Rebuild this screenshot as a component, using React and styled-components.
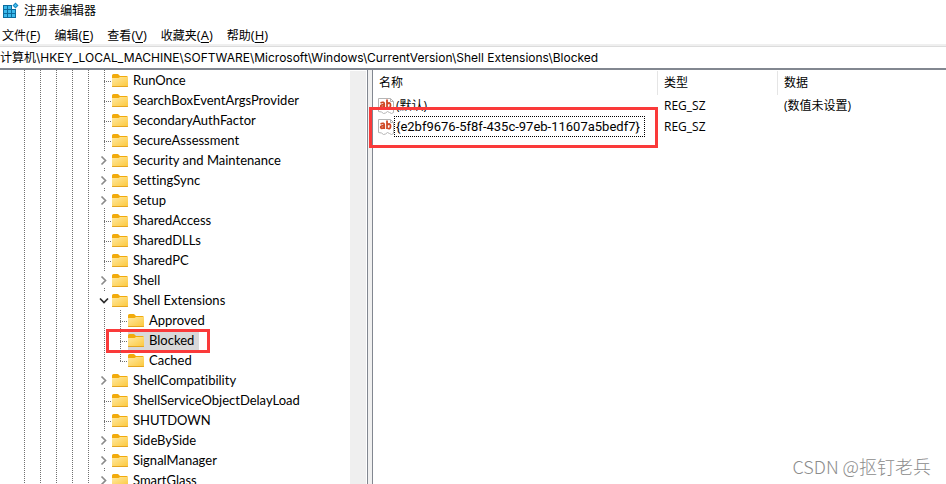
import React from "react";
import styled, { createGlobalStyle, css } from "styled-components";

const uiFont = '"Open Sans", "Noto Sans CJK SC", sans-serif';
const treeFont = 'Lato, "Noto Sans CJK SC", sans-serif';
const valueFont = 'Roboto, "Noto Sans CJK SC", sans-serif';
const addressFont = 'Inter, "Noto Sans CJK SC", sans-serif';

const GlobalStyle = createGlobalStyle`
  * { box-sizing: border-box; }
  body { margin: 0; background: #fff; overflow: hidden; }
  button, input { font: inherit; color: inherit; border: 0; background: none; padding: 0; }
`;

const Window = styled.div`
  position: relative;
  display: flex;
  flex-direction: column;
  height: 100vh;
  color: #000;
  background: #fff;
  font: 12px/20px ${uiFont};
  font-variant-ligatures: none;
`;

const TitleBar = styled.header`
  display: flex;
  align-items: center;
  gap: 5px;
  height: 22px;
  padding-left: 3px;
`;

const Title = styled.h1`
  margin: 0;
  font-size: 12px;
  font-weight: 400;
`;

const MenuBar = styled.nav`
  display: flex;
  align-items: center;
  gap: 14px;
  height: 24px;
  padding: 4px 2px 0;
  border-bottom: 2px solid #efefef;
`;

const MenuItem = styled.button`
  white-space: nowrap;
  text-underline-offset: 2px;
`;

const MenuKey = styled.span`
  font-size: 13px;
`;

const AddressBar = styled.input`
  width: 100%;
  height: 24px;
  padding-bottom: 2px;
  border-top: 1px solid #dcdcdc;
  border-bottom: 2px solid #828790;
  font: 12px/20px ${addressFont};
  font-variant-ligatures: none;
  outline: 0;
`;

const Panes = styled.main`
  display: flex;
  flex: 1;
  min-height: 0;
`;

const TreePane = styled.section`
  display: flex;
  flex: 0 0 368px;
  border-right: 1px solid #828790;
`;

const Tree = styled.ul`
  flex: 1;
  margin: 0;
  padding: 0 0 0 16px;
  overflow: hidden;
  list-style: none;
  font: 13px/20px ${treeFont};
  font-variant-ligatures: none;
`;

const ScrollTrack = styled.div`
  width: 16px;
  margin: 1px 1px 0 0;
  background: #efefef;
`;

const Splitter = styled.div`
  flex: 0 0 4px;
  background: #f0f0f0;
`;

const TreeRow = styled.li`
  position: relative;
  display: flex;
  height: 20px;
`;

const vertical = "repeating-linear-gradient(to bottom, #707070 0 1px, transparent 1px 2px)";
const horizontal = "repeating-linear-gradient(to right, #707070 0 1px, transparent 1px 2px)";

const guideKinds = {
  line: css`
    background: ${vertical} 8px 0 / 1px 20px no-repeat;
  `,
  leaf: css`
    background: ${vertical} 8px 0 / 1px 20px no-repeat, ${horizontal} 8px 11px / 8px 1px no-repeat;
  `,
  last: css`
    background: ${vertical} 8px 0 / 1px 12px no-repeat, ${horizontal} 8px 11px / 8px 1px no-repeat;
  `,
  closed: css`
    background: ${vertical} 8px 0 / 1px 2px no-repeat, ${vertical} 8px 18px / 1px 2px no-repeat;
  `,
};

const Guide = styled.span`
  flex: 0 0 16px;
  height: 20px;
  ${(p) => guideKinds[p.$kind]}
`;

const Expander = styled.button`
  display: flex;
  align-items: center;
  justify-content: center;
  flex: 0 0 16px;
  height: 20px;
  ${guideKinds.closed}
`;

const TreeLabel = styled.button`
  display: flex;
  align-items: center;
  gap: 5px;
  height: 20px;
  padding-right: 5px;
  white-space: nowrap;
  background: ${(p) => (p.$selected ? "#d9d9d9" : "none")};
`;

const TreeMark = styled.span`
  position: absolute;
  inset: -1px auto auto 90px;
  width: 104px;
  height: 24px;
  border: 3px solid #fa3a3a;
  pointer-events: none;
`;

const ListPane = styled.section`
  flex: 1;
  min-width: 0;
  padding-top: 1px;
  border-left: 1px solid #828790;
`;

const ValueTable = styled.table`
  width: 100%;
  table-layout: fixed;
  border-collapse: separate;
  border-spacing: 0;
`;

const HeadCell = styled.th`
  width: ${(p) => p.$width || "auto"};
  height: 24px;
  padding: 0 6px;
  border-right: ${(p) => (p.$width ? "1px solid #e5e5e5" : "0")};
  font-weight: 400;
  text-align: left;
`;

const Cell = styled.td`
  height: 21px;
  padding: 0 6px;
  white-space: nowrap;
`;

const NameCell = styled(Cell)`
  padding: 0 4px;
`;

const NameBox = styled.div`
  position: relative;
  display: flex;
  align-items: center;
  height: 21px;
`;

const ValueName = styled.span`
  height: 21px;
  padding: 0 4px 0 1px;
  border: 1px dotted ${(p) => (p.$focused ? "#000" : "transparent")};
  font: ${(p) => (p.$focused ? `13px/19px ${valueFont}` : `12px/19px ${uiFont}`)};
`;

const ValueMark = styled.span`
  position: absolute;
  inset: -9px auto auto -8px;
  width: 289px;
  height: 41px;
  border: 3px solid #fa3a3a;
  pointer-events: none;
`;

const Watermark = styled.footer`
  position: absolute;
  right: 15px;
  bottom: 6px;
  color: #8c8c8c;
  font: 300 18px/24px "Noto Sans CJK SC", sans-serif;
`;

const RegistryIcon = () => (
  <svg width="16" height="18" viewBox="0 0 16 18" aria-hidden="true">
    <path d="M0 3h13v13H0z" fill="#0b6c9e" />
    <path d="M1 4h3v3H1zM5 4h3v3H5zM1 8h3v3H1zM5 8h3v3H5zM9 8h3v3H9zM1 12h3v3H1zM5 12h3v3H5zM9 12h3v3H9z" fill="#3bb8ea" />
    <path d="M9 3h4v4H9z" fill="#fff" />
    <path d="M12.500 0.500l3 3-3 3-3-3z" fill="#1788c0" />
    <path d="M12.500 2L14 3.500l-1.500 1.500L11 3.500z" fill="#4cc5f2" />
  </svg>
);

const FolderIcon = () => (
  <svg width="16" height="20" viewBox="0 0 16 20" aria-hidden="true">
    <defs>
      <linearGradient id="folder" x1="0" y1="0" x2="1" y2="1">
        <stop offset="0" stopColor="#ffe9a2" />
        <stop offset="1" stopColor="#fcc93f" />
      </linearGradient>
    </defs>
    <path d="M0 5.500Q0 4 1.500 4H6l2 2h6.500Q16 6 16 7.500V9H0z" fill="#f2ab0c" />
    <path d="M0 8h6.500L8 7h8v9H0z" fill="url(#folder)" />
    <path d="M0 16h16v.5q0 .5-1 .5H1q-1 0-1-.5z" fill="#e5a520" />
  </svg>
);

const ClosedIcon = () => (
  <svg width="8" height="12" viewBox="0 0 8 12" aria-hidden="true">
    <path d="M1.500 2.500l4 4-4 4" fill="none" stroke="#8b8b8b" strokeWidth="1.700" />
  </svg>
);

const OpenIcon = () => (
  <svg width="10" height="8" viewBox="0 0 10 8" aria-hidden="true">
    <path d="M1 2.500l4 4 4-4" fill="none" stroke="#2c2c2c" strokeWidth="1.700" />
  </svg>
);

const ValueIconSvg = styled.svg`
  flex: none;
  margin-left: 1px;
`;

const StringIcon = () => (
  <ValueIconSvg width="16" height="18" viewBox="0 0 16 18" aria-hidden="true">
    <path d="M.5 1.500h12l3 3v11l-2 1-2-1-2-1-2 1.500-2 .5-2-1.500-3-.5z" fill="#fff" stroke="#b5b5b5" />
    <path d="M12.500 1.500v3h3" fill="none" stroke="#b5b5b5" />
    <g fill="none" stroke="#d04a26" strokeWidth="1.800">
      <path d="M2.500 5.800Q6.200 4.500 6.200 7v4M6.200 7.800Q2.700 7.500 2.700 9.300T6.200 9.500" />
      <path d="M9 2.500V11M9 7q3.500-2.500 3.500 1.200T9 10" />
    </g>
  </ValueIconSvg>
);

const menus = [
  ["文件", "F"],
  ["编辑", "E"],
  ["查看", "V"],
  ["收藏夹", "A"],
  ["帮助", "H"],
];

const keys = [
  { name: "RunOnce" },
  { name: "SearchBoxEventArgsProvider" },
  { name: "SecondaryAuthFactor" },
  { name: "SecureAssessment" },
  { name: "Security and Maintenance", state: "closed" },
  { name: "SettingSync", state: "closed" },
  { name: "Setup", state: "closed" },
  { name: "SharedAccess" },
  { name: "SharedDLLs" },
  { name: "SharedPC" },
  { name: "Shell", state: "closed" },
  { name: "Shell Extensions", state: "open" },
  { name: "Approved", child: true },
  { name: "Blocked", child: true, selected: true },
  { name: "Cached", child: true, last: true },
  { name: "ShellCompatibility", state: "closed" },
  { name: "ShellServiceObjectDelayLoad" },
  { name: "SHUTDOWN" },
  { name: "SideBySide", state: "closed" },
  { name: "SignalManager", state: "closed" },
  { name: "SmartGlass", state: "closed" },
];

const values = [
  { name: "(默认)", type: "REG_SZ", data: "(数值未设置)" },
  { name: "{e2bf9676-5f8f-435c-97eb-11607a5bedf7}", type: "REG_SZ", data: "", focused: true },
];

function KeyRow({ item }) {
  const depth = item.child ? 6 : 5;
  return (
    <TreeRow role="treeitem" aria-level={depth + 1} aria-selected={!!item.selected}>
      {Array.from({ length: depth }, (_, i) => (
        <Guide key={i} $kind="line" />
      ))}
      {item.state ? (
        <Expander aria-label={item.state === "open" ? `Collapse ${item.name}` : `Expand ${item.name}`}>
          {item.state === "open" ? <OpenIcon /> : <ClosedIcon />}
        </Expander>
      ) : (
        <Guide $kind={item.last ? "last" : "leaf"} />
      )}
      <TreeLabel $selected={item.selected}>
        <FolderIcon />
        {item.name}
      </TreeLabel>
      {item.selected && <TreeMark />}
    </TreeRow>
  );
}

export default function App() {
  return (
    <Window>
      <GlobalStyle />
      <TitleBar>
        <RegistryIcon />
        <Title>注册表编辑器</Title>
      </TitleBar>
      <MenuBar>
        {menus.map(([label, key]) => (
          <MenuItem key={key}>
            {label}
            <MenuKey>
              (<u>{key}</u>)
            </MenuKey>
          </MenuItem>
        ))}
      </MenuBar>
      <AddressBar
        aria-label="地址"
        defaultValue={"计算机\\HKEY_LOCAL_MACHINE\\SOFTWARE\\Microsoft\\Windows\\CurrentVersion\\Shell Extensions\\Blocked"}
      />
      <Panes>
        <TreePane>
          <Tree role="tree">
            {keys.map((item) => (
              <KeyRow key={item.name} item={item} />
            ))}
          </Tree>
          <ScrollTrack />
        </TreePane>
        <Splitter />
        <ListPane>
          <ValueTable>
            <thead>
              <tr>
                <HeadCell $width="285px">名称</HeadCell>
                <HeadCell $width="120px">类型</HeadCell>
                <HeadCell>数据</HeadCell>
              </tr>
            </thead>
            <tbody>
              {values.map((v) => (
                <tr key={v.name}>
                  <NameCell>
                    <NameBox>
                      <StringIcon />
                      <ValueName $focused={v.focused}>{v.name}</ValueName>
                      {v.focused && <ValueMark />}
                    </NameBox>
                  </NameCell>
                  <Cell>{v.type}</Cell>
                  <Cell>{v.data}</Cell>
                </tr>
              ))}
            </tbody>
          </ValueTable>
        </ListPane>
      </Panes>
      <Watermark>CSDN @抠钉老兵</Watermark>
    </Window>
  );
}
